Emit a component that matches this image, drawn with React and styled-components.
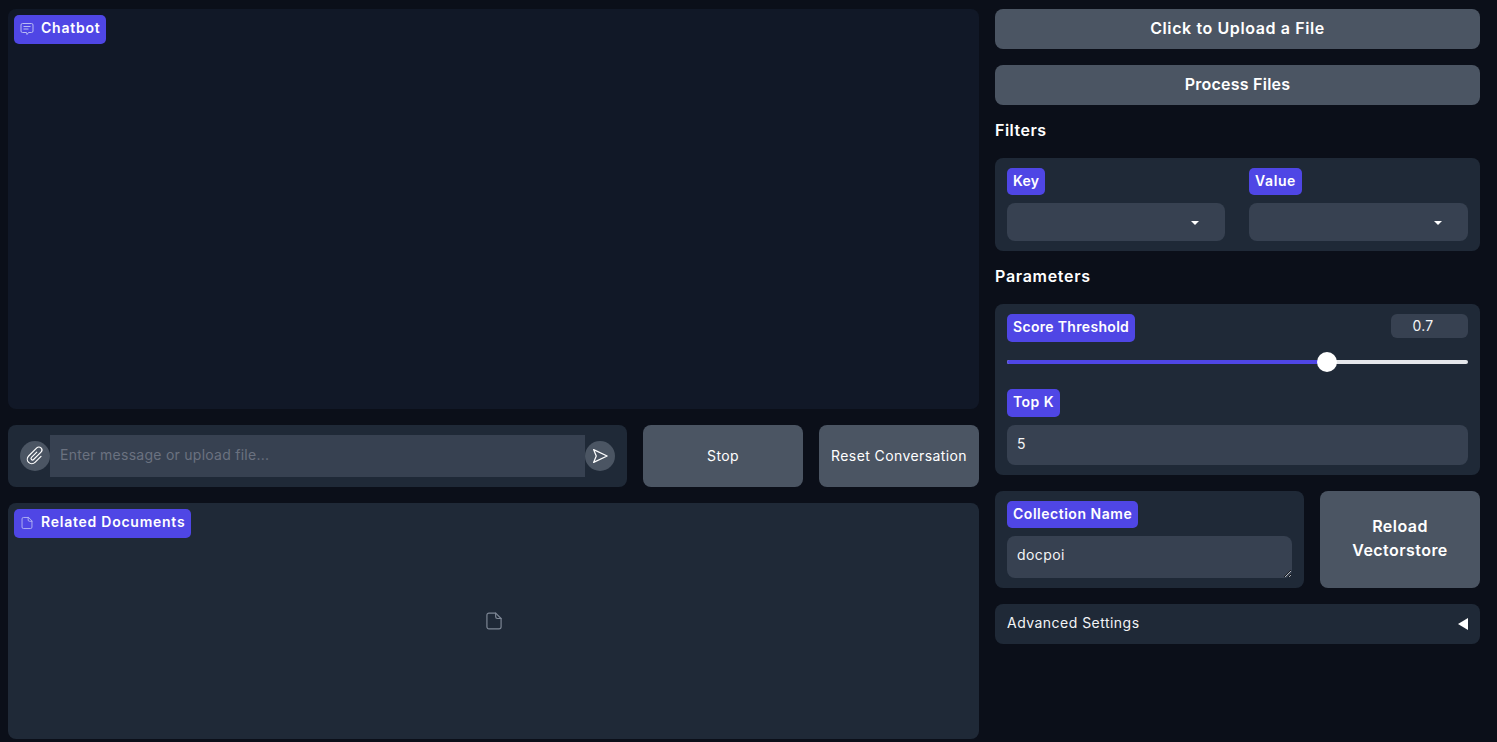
import React from "react";
import styled, { createGlobalStyle } from "styled-components";

const Global = createGlobalStyle`
  html, body { margin: 0; padding: 0; background: #0b0f19; }
  * { box-sizing: border-box; }
  body { font-family: Inter, "Noto Sans", sans-serif; color: #f3f4f6; color-scheme: dark; }
`;

const Page = styled.div`
  width: 1497px;
  height: 742px;
  padding: 9px 17px 3px 8px;
  display: grid;
  grid-template-columns: 971px 485px;
  column-gap: 16px;
  background: #0b0f19;
  overflow: hidden;
`;
const Column = styled.div`
  display: flex;
  flex-direction: column;
  gap: 16px;
  min-width: 0;
`;
const DocPanel = styled.section`
  position: relative;
  height: ${(p) => p.$h}px;
  flex: none;
  border-radius: 8px;
  background: ${(p) => p.$bg};
  display: flex;
  align-items: center;
  justify-content: center;
`;
const Badge = styled.div`
  display: inline-flex;
  align-items: center;
  align-self: flex-start;
  height: ${(p) => p.$h || 28}px;
  padding: 0 6px ${(p) => p.$pb ?? 4}px;
  background: #4f46e5;
  border-radius: 5px;
  color: #fff;
  font-size: 14px;
  font-weight: 600;
  letter-spacing: ${(p) => p.$ls ?? 0.45}px;
  white-space: nowrap;
`;
const FloatingBadge = styled(Badge)`
  position: absolute;
  top: 6px;
  left: 6px;
  height: 29px;
  gap: 7px;
  & > svg { flex: none; color: #b9bbf3; margin-top: 2px; }
`;
const InputRow = styled.div`
  display: grid;
  grid-template-columns: 619px 160px 160px;
  column-gap: 16px;
  height: 62px;
`;
const Composer = styled.div`
  background: #1f2937;
  border-radius: 8px;
  padding: 10px 12px;
  display: flex;
  align-items: center;
`;
const RoundButton = styled.button`
  flex: none;
  width: 30px;
  height: 30px;
  padding: 0;
  border: 0;
  border-radius: 50%;
  background: #4b5563;
  color: #fff;
  display: flex;
  align-items: center;
  justify-content: center;
`;
const MessageInput = styled.input`
  flex: 1;
  min-width: 0;
  height: 42px;
  border: 0;
  outline: 0;
  background: #374151;
  padding: 0 10px 4px;
  color: #f3f4f6;
  font: 400 14px Inter, sans-serif;
  letter-spacing: 0.26px;
  &::placeholder { color: #6b7280; opacity: 1; }
`;
const Button = styled.button`
  border: 0;
  border-radius: 8px;
  background: #4b5563;
  color: #fff;
  font-family: Inter, sans-serif;
  font-size: ${(p) => p.$size || 14}px;
  font-weight: ${(p) => p.$weight || 400};
  letter-spacing: ${(p) => p.$ls ?? 0.4}px;
  line-height: 24px;
  padding: 0 0 ${(p) => p.$pb || 0}px;
  height: ${(p) => (p.$h ? `${p.$h}px` : "auto")};
  flex: none;
`;
const Heading = styled.h2`
  margin: 0;
  height: 21px;
  line-height: 19px;
  font-size: 16px;
  font-weight: 600;
  letter-spacing: ${(p) => p.$ls ?? 0.4}px;
  color: #fff;
`;
const Card = styled.div`
  background: #1f2937;
  border-radius: 8px;
  padding: 10px 12px;
`;
const FilterGrid = styled(Card)`
  display: grid;
  grid-template-columns: 218px 219px;
  column-gap: 24px;
  height: 93px;
`;
const Field = styled.div`
  display: flex;
  flex-direction: column;
  gap: 8px;
  min-width: 0;
`;
const Select = styled.div`
  height: 38px;
  border-radius: 8px;
  background: #374151;
  display: flex;
  align-items: center;
  justify-content: flex-end;
  padding-right: 26px;
  &::after {
    content: "";
    border-left: 4px solid transparent;
    border-right: 4px solid transparent;
    border-top: 4px solid #fff;
    margin-top: 2px;
  }
`;
const ParamCard = styled(Card)`
  height: 171px;
  display: flex;
  flex-direction: column;
`;
const SliderHead = styled.div`
  display: flex;
  justify-content: space-between;
  align-items: flex-start;
`;
const NumberBox = styled.div`
  width: 77px;
  height: 24px;
  line-height: 24px;
  padding-right: 13px;
  border-radius: 6px;
  background: #374151;
  text-align: center;
  font-size: 14px;
  letter-spacing: 0.3px;
  color: #f3f4f6;
`;
const Track = styled.div`
  position: relative;
  height: 4px;
  margin: 18px 0 25px;
  background: #e5e7eb;
  border-radius: 2px;
`;
const TrackFill = styled.div`
  height: 100%;
  background: #4f46e5;
  border-radius: 2px;
`;
const Thumb = styled.div`
  position: absolute;
  top: -8px;
  width: 20px;
  height: 20px;
  margin-left: -10px;
  border-radius: 50%;
  background: #fff;
`;
const TextInput = styled.input`
  margin-top: 8px;
  width: 100%;
  height: 40px;
  border: 0;
  outline: 0;
  border-radius: 8px;
  background: #374151;
  padding: 0 10px 3px;
  color: #f3f4f6;
  font: 400 14px Inter, sans-serif;
`;
const CollectionRow = styled.div`
  display: grid;
  grid-template-columns: 309px 160px;
  column-gap: 16px;
  height: 97px;
`;
const TextArea = styled.textarea`
  display: block;
  width: 100%;
  height: 42px;
  border: 0;
  outline: 0;
  border-radius: 8px;
  background: #374151;
  padding: 8px 10px;
  color: #f3f4f6;
  font: 400 14px/21px Inter, sans-serif;
  letter-spacing: 0.42px;
  resize: vertical;
`;
const Accordion = styled.div`
  height: 40px;
  border-radius: 8px;
  background: #1f2937;
  padding: 0 12px 3px;
  display: flex;
  align-items: center;
  justify-content: space-between;
  font-size: 14px;
  letter-spacing: 0.47px;
  color: #f3f4f6;
`;
const Caret = styled.span`
  width: 0;
  height: 0;
  margin-top: 3px;
  border-top: 6px solid transparent;
  border-bottom: 6px solid transparent;
  border-right: 10px solid #fff;
`;

const ChatIcon = () => (
  <svg width="14" height="14" viewBox="0 0 14 14" fill="none" stroke="currentColor" strokeWidth="1">
    <path d="M2.5 1.5h9a1.5 1.5 0 0 1 1.5 1.5v6a1.5 1.5 0 0 1-1.5 1.5H8.5L7 12.5 6.5 10.5h-4A1.5 1.5 0 0 1 1 9V3a1.5 1.5 0 0 1 1.5-1.5Z" />
    <path d="M3.5 4.5h7M3.5 7h5" />
  </svg>
);
const FileIcon = ({ size, color, width = 1.5 }) => (
  <svg width={size} height={size} viewBox="0 0 24 24" fill="none" stroke={color || "currentColor"} strokeWidth={width} strokeLinecap="round" strokeLinejoin="round">
    <path d="M14 2.5H6a2.5 2.5 0 0 0-2.5 2.5v14A2.5 2.5 0 0 0 6 21.5h12a2.5 2.5 0 0 0 2.5-2.5V9Z" />
    <path d="M14 2.5V7a2 2 0 0 0 2 2h4.5" />
  </svg>
);
const ClipIcon = () => (
  <svg width="24" height="24" viewBox="0 0 24 24" fill="none" stroke="#fff" strokeWidth="1.2" strokeLinecap="round" strokeLinejoin="round">
    <g transform="rotate(45 12 12)">
      <path d="M16.5 8V16.5a4.5 4.5 0 0 1-9 0V5a3 3 0 0 1 6 0V15.5a1.5 1.5 0 0 1-3 0V8" />
    </g>
  </svg>
);
const SendIcon = () => (
  <svg width="18" height="18" viewBox="0 0 24 24" fill="none" stroke="#fff" strokeWidth="1.7" strokeLinejoin="round">
    <path d="M3.5 3.5 21.5 12l-18 8.5L7 12Z" />
  </svg>
);

export default function App() {
  return (
    <Page>
      <Global />
      <Column>
        <DocPanel $h={400} $bg="#111827">
          <FloatingBadge $ls={0.75}><ChatIcon />Chatbot</FloatingBadge>
        </DocPanel>
        <InputRow>
          <Composer>
            <RoundButton aria-label="Attach"><ClipIcon /></RoundButton>
            <MessageInput placeholder="Enter message or upload file..." />
            <RoundButton aria-label="Send"><SendIcon /></RoundButton>
          </Composer>
          <Button>Stop</Button>
          <Button>Reset Conversation</Button>
        </InputRow>
        <DocPanel $h={236} $bg="#1f2937">
          <FloatingBadge $ls={0.75}><FileIcon size={14} />Related Documents</FloatingBadge>
          <FileIcon size={20} color="#7f8896" width={1.4} />
        </DocPanel>
      </Column>
      <Column>
        <Button $size={16} $weight={600} $ls={0.6} $h={40} $pb={2}>Click to Upload a File</Button>
        <Button $size={16} $weight={600} $ls={0.25} $h={40} $pb={2}>Process Files</Button>
        <Heading $ls={0.5}>Filters</Heading>
        <FilterGrid>
          <Field><Badge $h={27} $pb={2} $ls={0.25}>Key</Badge><Select /></Field>
          <Field><Badge $h={27} $pb={2} $ls={0.6}>Value</Badge><Select /></Field>
        </FilterGrid>
        <Heading $ls={0.7}>Parameters</Heading>
        <ParamCard>
          <SliderHead>
            <Badge $ls={0.32}>Score Threshold</Badge>
            <NumberBox>0.7</NumberBox>
          </SliderHead>
          <Track>
            <TrackFill style={{ width: "69.5%" }} />
            <Thumb style={{ left: "69.5%" }} />
          </Track>
          <Badge $pb={4}>Top K</Badge>
          <TextInput defaultValue="5" />
        </ParamCard>
        <CollectionRow>
          <Card>
            <Field>
              <Badge $h={27} $pb={2} $ls={0.52}>Collection Name</Badge>
              <TextArea defaultValue="docpoi" />
            </Field>
          </Card>
          <Button $size={16} $weight={600} $ls={0.45} $pb={4}>Reload<br />Vectorstore</Button>
        </CollectionRow>
        <Accordion>Advanced Settings<Caret /></Accordion>
      </Column>
    </Page>
  );
}
